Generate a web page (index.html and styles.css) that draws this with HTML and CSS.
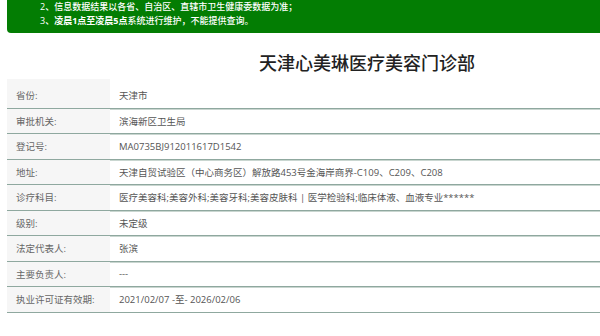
FILE: index.html
```html
<!DOCTYPE html>
<html lang="zh-CN">
<head>
<meta charset="utf-8">
<title>天津心美琳医疗美容门诊部</title>
<link rel="stylesheet" href="styles.css">
</head>
<body>
<div class="page">
  <div class="notice">
    <p>2、信息数据结果以各省、自治区、直辖市卫生健康委数据为准；</p>
    <p>3、<b>凌晨1点至凌晨5点</b>系统进行维护，不能提供查询。</p>
  </div>
  <h1 class="title">天津心美琳医疗美容门诊部</h1>
  <div class="info">
    <div class="row first"><div class="label">省份:</div><div class="value">天津市</div></div>
    <div class="row"><div class="label">审批机关:</div><div class="value">滨海新区卫生局</div></div>
    <div class="row"><div class="label">登记号:</div><div class="value">MA0735BJ912011617D1542</div></div>
    <div class="row"><div class="label">地址:</div><div class="value">天津自贸试验区（中心商务区）解放路453号金海岸商界-C109、C209、C208</div></div>
    <div class="row"><div class="label">诊疗科目:</div><div class="value">医疗美容科;美容外科;美容牙科;美容皮肤科 | 医学检验科;临床体液、血液专业******</div></div>
    <div class="row"><div class="label">级别:</div><div class="value">未定级</div></div>
    <div class="row"><div class="label">法定代表人:</div><div class="value">张滨</div></div>
    <div class="row"><div class="label">主要负责人:</div><div class="value">---</div></div>
    <div class="row"><div class="label">执业许可证有效期:</div><div class="value">2021/02/07 -至- 2026/02/06</div></div>
  </div>
</div>
</body>
</html>
```

FILE: styles.css
```css
html, body {
  margin: 0;
  padding: 0;
  background: #ffffff;
}
body {
  font-family: "Open Sans", "Noto Sans CJK SC", sans-serif;
  overflow: hidden;
}
.page {
  padding-left: 7px;
}
.notice {
  background: #037d03;
  color: #ffffff;
  padding: 0 0 5px 33px;
  border-bottom-left-radius: 4px;
  font-size: 9px;
  line-height: 14px;
  font-weight: 500;
}
.notice p {
  margin: 0;
}
.notice b {
  font-weight: 700;
}
.title {
  margin: 0;
  padding: 18px 0 0 127px;
  height: 28px;
  text-align: center;
  font-family: "Noto Sans CJK SC", sans-serif;
  font-size: 18px;
  line-height: 22px;
  font-weight: 500;
  color: #222222;
}
.info {
  font-size: 9.5px;
  color: #555555;
}
.row {
  display: flex;
  height: 24.5px;
  border-bottom: 1px solid #8fa89f;
  box-shadow: 0 1px 0 #c9d6d0;
}
.row.first {
  height: 28.5px;
}
.label {
  width: 94px;
  padding-left: 9px;
  background: #f6f6f6;
  display: flex;
  align-items: center;
  color: #666666;
}
.value {
  padding-left: 9px;
  display: flex;
  align-items: center;
  color: #555555;
}
.row.first .label,
.row.first .value {
  padding-top: 4px;
}
```
